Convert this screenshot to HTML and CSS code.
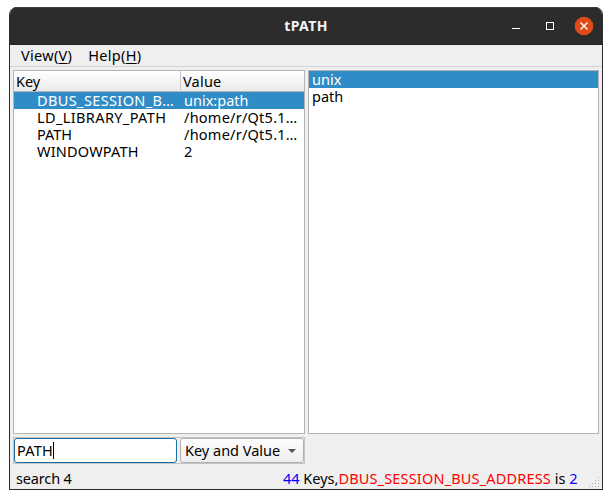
FILE: index.html
```html
<!DOCTYPE html>
<html lang="en">
<head>
<meta charset="utf-8">
<title>tPATH</title>
<link rel="stylesheet" href="styles.css">
</head>
<body>
<div class="window">
  <header class="titlebar">
    <h1 class="title">tPATH</h1>
    <div class="controls">
      <svg width="90" height="20" viewBox="0 0 90 20">
        <path d="M4 12.5h8" stroke="#fff"/>
        <rect x="38.500" y="6.500" width="7" height="7" fill="none" stroke="#fff"/>
        <circle cx="76" cy="10" r="9.300" fill="#e04a18"/>
        <path d="M72.500 6.500l7 7M79.500 6.500l-7 7" stroke="#fff" stroke-width="1.400"/>
      </svg>
    </div>
  </header>
  <nav class="menubar">
    <span class="menu view">View(<u>V</u>)</span>
    <span class="menu help">Help(<u>H</u>)</span>
  </nav>
  <main class="content">
    <section class="left">
      <div class="frame tree">
        <div class="row head"><span>Key</span><span>Value</span></div>
        <div class="row selected"><span class="wide">DBUS_SESSION_B…</span><span>unix:path</span></div>
        <div class="row"><span class="wide">LD_LIBRARY_PATH</span><span class="path">/home/r/Qt5.1…</span></div>
        <div class="row"><span>PATH</span><span class="path">/home/r/Qt5.1…</span></div>
        <div class="row"><span class="name">WINDOWPATH</span><span>2</span></div>
      </div>
      <div class="search">
        <div class="input"><span class="query">PATH</span><i class="caret"></i></div>
        <div class="combo"><span>Key and Value</span><i class="arrow"></i></div>
      </div>
    </section>
    <section class="frame list">
      <div class="item selected">unix</div>
      <div class="item">path</div>
    </section>
  </main>
  <footer class="status">
    <span class="found">search 4</span>
    <span class="summary"><em class="blue">44</em> Keys,<em class="red">DBUS_SESSION_BUS_ADDRESS</em> is <em class="blue">2</em></span>
    <svg class="grip" width="11" height="11" viewBox="0 0 11 11" fill="#b4b4b4">
      <path d="M9 0h1v1h-1zM6 3h1v1h-1zM9 3h1v1h-1zM3 6h1v1h-1zM6 6h1v1h-1zM9 6h1v1h-1zM0 9h1v1h-1zM3 9h1v1h-1zM6 9h1v1h-1zM9 9h1v1h-1z"/>
    </svg>
  </footer>
</div>
</body>
</html>
```
FILE: styles.css
```css
* { box-sizing: border-box; }
body { margin: 0; width: 612px; height: 499px; overflow: hidden; background: #fff; padding: 7px 9px;
  font: 14.5px/17px "Noto Sans", "Open Sans", sans-serif; color: #000; white-space: nowrap; }
em, i { font-weight: normal; font-style: normal; }
.window { width: 594px; height: 483px; display: flex; flex-direction: column; background: #efefef;
  border: 1px solid #2c2c2c; border-top: 0; border-radius: 8px 8px 0 0; overflow: hidden; }
.titlebar { height: 38px; flex: none; background: #2c2c2c; border-top: 1px solid #3d3d3d; border-bottom: 1px solid #222;
  display: grid; grid-template-columns: 1fr auto 1fr; align-items: center; }
.title { grid-column: 2; margin: 0; font-size: 14px; font-weight: 700; line-height: 20px; letter-spacing: .4px; color: #f4f4f4; }
.controls { justify-self: end; height: 20px; padding-right: 4px; }
.controls svg { display: block; }
.menubar { height: 22px; flex: none; display: flex; gap: 16px; padding: 2px 10px 0 11px; border-bottom: 1px solid #d3d3d3; }
.menu { letter-spacing: .3px; }
.menu u { text-underline-offset: 2px; text-decoration-thickness: 1px; }
.content { display: flex; gap: 3px; padding: 3px 3px 0; height: 397px; flex: none; }
.left { width: 292px; display: flex; flex-direction: column; gap: 3px; }
.frame { border: 1px solid #b4b4b4; background: #fff; }
.tree { height: 364px; }
.row { display: grid; grid-template-columns: 167px 123px; height: 17px; }
.row span { padding-left: 3px; }
.row span:first-child { padding-left: 23px; }
.row .wide { letter-spacing: .38px; }
.row .path { letter-spacing: .24px; }
.row .name { letter-spacing: .2px; }
.head { height: 21px; line-height: 21px; background: linear-gradient(#fff, #ebebeb); border-bottom: 1px solid #b4b4b4; }
.row.head span:first-child { padding-left: 2px; border-right: 1px solid #c8c8c8; }
.row.head span:last-child { padding-left: 2px; letter-spacing: .2px; }
.selected { background: #308cc6; color: #fff; }
.list { width: 291px; height: 364px; }
.item { height: 17px; padding-left: 3px; }
.search { height: 27px; border: 1px solid #c4c4c4; display: flex; justify-content: space-between; }
.input { width: 163px; border: 1px solid #1c6ea4; border-radius: 3px; background: #fff; display: flex; align-items: center; padding-left: 2px; }
.query { letter-spacing: .2px; }
.caret { width: 1px; height: 17px; background: #000; }
.combo { width: 124px; border: 1px solid #b0b0b0; border-radius: 3px; background: linear-gradient(#fdfdfd, #eee);
  display: flex; align-items: center; justify-content: space-between; padding: 0 7px 0 4px; }
.arrow { border: 4px solid transparent; border-top-color: #555; border-bottom: 0; }
.status { flex: 1; display: flex; align-items: flex-start; padding: 6px 2px 0 6px; }
.found { letter-spacing: -.15px; }
.summary { margin-left: auto; margin-right: 11.5px; }
.blue { color: #00f; }
.red { color: #f00; letter-spacing: .17px; }
.grip { align-self: flex-end; margin-bottom: 1px; }
```
